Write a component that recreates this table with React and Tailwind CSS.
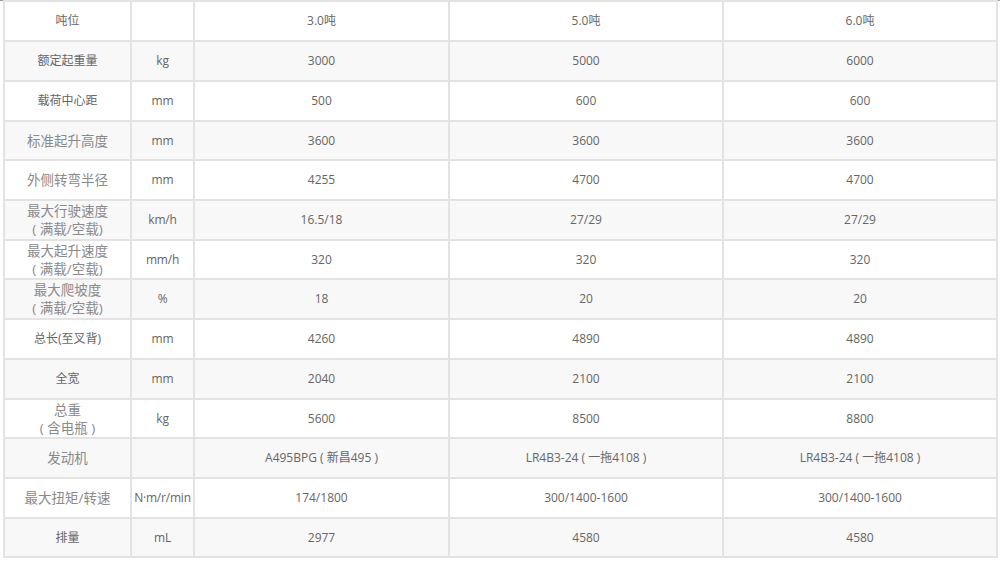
import React from "react";

const rows = [
  ["吨位", "", "3.0吨", "5.0吨", "6.0吨", 40, false],
  ["额定起重量", "kg", "3000", "5000", "6000", 40, false],
  ["载荷中心距", "mm", "500", "600", "600", 40, false],
  ["标准起升高度", "mm", "3600", "3600", "3600", 39, true],
  ["外侧转弯半径", "mm", "4255", "4700", "4700", 40, true],
  [["最大行驶速度", "( 满载/空载)"], "km/h", "16.5/18", "27/29", "27/29", 40, true],
  [["最大起升速度", "( 满载/空载)"], "mm/h", "320", "320", "320", 39, true],
  [["最大爬坡度", "( 满载/空载)"], "%", "18", "20", "20", 40, true],
  ["总长(至叉背)", "mm", "4260", "4890", "4890", 40, false],
  ["全宽", "mm", "2040", "2100", "2100", 40, false],
  [["总重", "( 含电瓶 )"], "kg", "5600", "8500", "8800", 39, true],
  ["发动机", "", "A495BPG ( 新昌495 )", "LR4B3-24 ( 一拖4108 )", "LR4B3-24 ( 一拖4108 )", 40, true],
  ["最大扭矩/转速", "N·m/r/min", "174/1800", "300/1400-1600", "300/1400-1600", 40, true],
  ["排量", "mL", "2977", "4580", "4580", 39, false],
];

export default function App() {
  return (
    <div
      className="w-[1000px] h-[561px] bg-white overflow-hidden"
      style={{ fontFamily: '"Open Sans", "Noto Sans CJK SC", sans-serif' }}
    >
      <div className="h-px bg-[#9a9a9a] w-full" />
      <table className="ml-[3px] w-[993px] border-collapse table-fixed text-[12px] text-[#666] -mt-px">
        <colgroup>
          <col className="w-[127px]" />
          <col className="w-[63px]" />
          <col className="w-[255px]" />
          <col className="w-[274px]" />
          <col className="w-[274px]" />
        </colgroup>
        <tbody>
          {rows.map((r, i) => (
            <tr
              key={i}
              className={i % 2 === 1 ? "bg-[#f8f8f8]" : "bg-white"}
              style={{ height: r[5] }}
            >
              <td
                className={
                  r[6]
                    ? "border-2 border-[#e3e3e3] text-center leading-[18px] p-0 whitespace-pre text-[13.5px] text-[#8a8a8a]"
                    : "border-2 border-[#e3e3e3] text-center leading-[18px] p-0 whitespace-pre text-[#666]"
                }
              >
                {Array.isArray(r[0]) ? (
                  <>
                    <div>{r[0][0]}</div>
                    <div>{r[0][1]}</div>
                  </>
                ) : (
                  r[0]
                )}
              </td>
              <td className="border-2 border-[#e3e3e3] text-center p-0 whitespace-nowrap tracking-[-0.2px] leading-[18px]">
                {r[1]}
              </td>
              <td className="border-2 border-[#e3e3e3] text-center p-0 whitespace-pre leading-[18px]">{r[2]}</td>
              <td className="border-2 border-[#e3e3e3] text-center p-0 whitespace-pre leading-[18px]">{r[3]}</td>
              <td className="border-2 border-[#e3e3e3] text-center p-0 whitespace-pre leading-[18px]">{r[4]}</td>
            </tr>
          ))}
        </tbody>
      </table>
    </div>
  );
}
